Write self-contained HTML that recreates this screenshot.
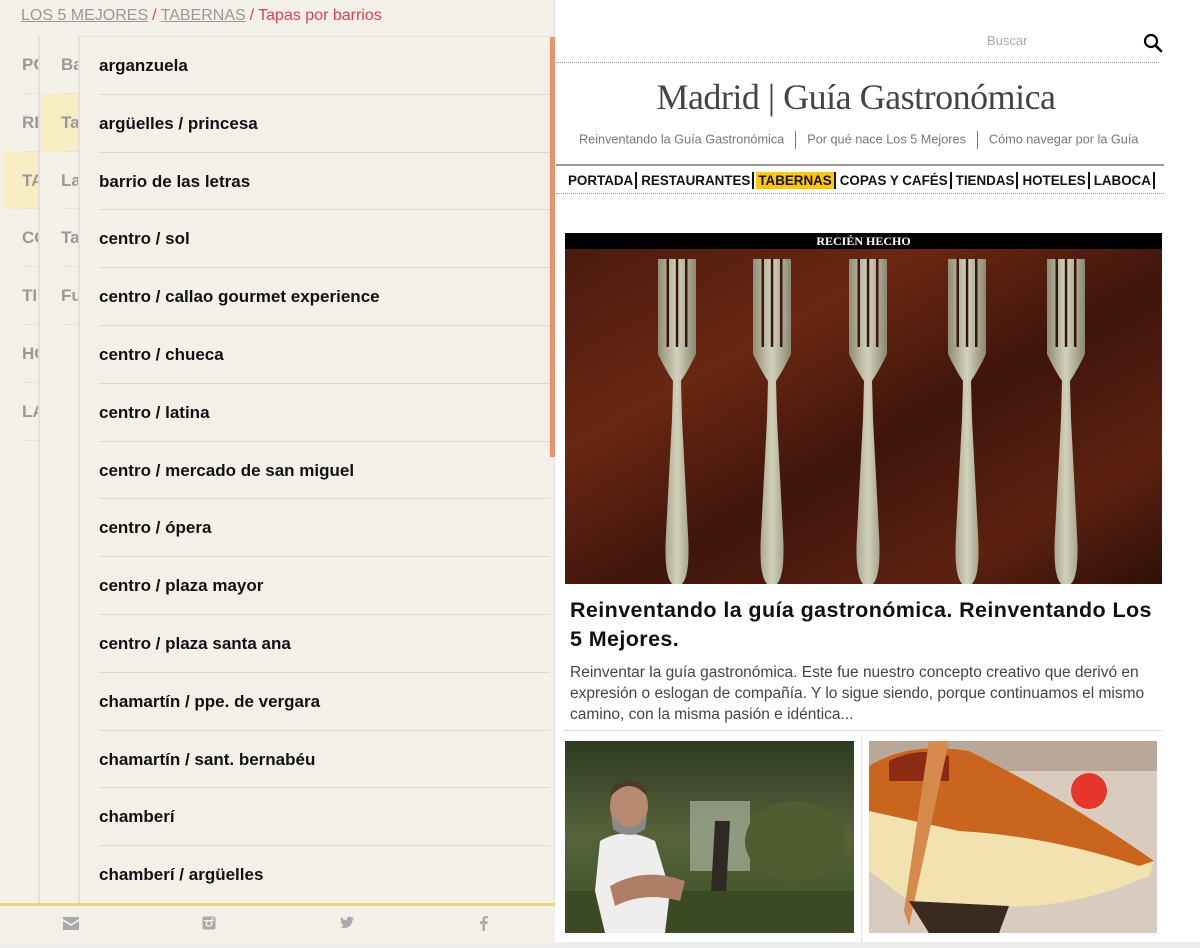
<!DOCTYPE html>
<html><head><meta charset="utf-8">
<style>
*{margin:0;padding:0;box-sizing:border-box}
body{width:1200px;height:948px;overflow:hidden;background:#fff;font-family:"Liberation Sans",sans-serif;position:relative}
.panel{position:absolute;left:0;top:0;width:555px;height:942px;background:#f3f0e7;border-right:1px solid #e3e0d6}
.crumb{position:absolute;left:21px;top:7px;font-size:16px;color:#999}
.crumb u{color:#999;text-decoration:underline}
.crumb .s{color:#e0414a;margin:0 4px}
.crumb .r{color:#e0414a}
.c1{position:absolute;left:3px;top:36px;width:37px;height:869px;border-right:2px solid #e5e1d6;overflow:hidden}
.c2{position:absolute;left:41px;top:36px;width:39px;height:869px;border-right:2px solid #e5e1d6;overflow:hidden}
.c3{position:absolute;left:80px;top:36px;width:475px;height:869px;overflow:hidden;border-top:1px solid #e8e4da}
.row{height:57.8px;position:relative;font-weight:bold;font-size:17px;line-height:57px;white-space:nowrap}
.c1 .row{color:#999;padding-left:19px}
.c1 .row:after{content:"";position:absolute;left:19px;right:0;bottom:0;border-bottom:1px solid #e5e1d6}
.c2 .row{color:#999;padding-left:20px}
.c2 .row:after{content:"";position:absolute;left:20px;right:0;bottom:0;border-bottom:1px solid #e5e1d6}
.hl{background:#f8ecc3}
.c3 .row{color:#111;padding-left:19px}
.c3 .row:after{content:"";position:absolute;left:19px;right:5px;bottom:0;border-bottom:1px solid #dedad0}
.scroll{position:absolute;left:550px;top:37px;width:5px;height:420px;background:#f0906a}
.foot{position:absolute;left:0;top:903px;width:555px;height:39px;background:#f3f0e7;border-top:3px solid #efd27a}
.foot svg{position:absolute;top:10px}
.bot{position:absolute;left:0;top:942px;width:1200px;height:6px;background:#eeeeec}
.search{position:absolute;left:987px;top:33px;font-size:13px;color:#aaa}
.dot{position:absolute;border-top:1px dotted #999}
h1{position:absolute;left:556px;width:600px;top:76px;text-align:center;font-family:"Liberation Serif",serif;font-weight:normal;font-size:36px;color:#444;letter-spacing:-0.5px}
.sub{position:absolute;left:579px;top:131px;font-size:12.7px;color:#777;white-space:nowrap}
.sub i{font-style:normal;display:inline-block;width:1px;height:18px;background:#777;vertical-align:middle;margin:0 11px 0 11px}
.nav{position:absolute;left:566px;top:172px;font-size:13.4px;font-weight:bold;color:#111;white-space:nowrap}
.nav span{display:inline-block;padding:1px 2px;border-right:2px solid #111;margin-right:2px}
.nav .on{background:#ffc800}
.tag{position:absolute;left:565px;top:233px;width:597px;height:16px;background:#000;color:#fff;font-family:"Liberation Serif",serif;font-weight:bold;font-size:12px;text-align:center;line-height:16px}
.title{position:absolute;left:570px;top:596px;width:592px;font-size:21.5px;font-weight:bold;line-height:29px;color:#111;letter-spacing:.4px}
.exc{position:absolute;left:570px;top:662px;width:590px;font-size:15.5px;line-height:21px;color:#444}
</style></head><body>
<div class="panel">
 <div class="crumb"><u>LOS 5 MEJORES</u><span class="s">/</span><u>TABERNAS</u><span class="s">/</span><span class="r">Tapas por barrios</span></div>
 <div class="c1">
  <div class="row">PORTADA</div><div class="row">RESTAURANTES</div><div class="row hl">TABERNAS</div><div class="row">COPAS</div><div class="row">TIENDAS</div><div class="row">HOTELES</div><div class="row">LABOCA</div>
 </div>
 <div class="c2">
  <div class="row">Barrios</div><div class="row hl">Tapas</div><div class="row">Las</div><div class="row">Tapas</div><div class="row">Fusion</div>
 </div>
 <div class="c3">
  <div class="row">arganzuela</div>
  <div class="row">argüelles / princesa</div>
  <div class="row">barrio de las letras</div>
  <div class="row">centro / sol</div>
  <div class="row">centro / callao gourmet experience</div>
  <div class="row">centro / chueca</div>
  <div class="row">centro / latina</div>
  <div class="row">centro / mercado de san miguel</div>
  <div class="row">centro / ópera</div>
  <div class="row">centro / plaza mayor</div>
  <div class="row">centro / plaza santa ana</div>
  <div class="row">chamartín / ppe. de vergara</div>
  <div class="row">chamartín / sant. bernabéu</div>
  <div class="row">chamberí</div>
  <div class="row">chamberí / argüelles</div>
 </div>
 <div class="scroll"></div>
 <div class="foot">
  <svg style="left:63px" width="16" height="14" viewBox="0 0 16 14"><path d="M0 1h16v2L8 8 0 3z M0 5l8 5 8-5v9H0z" fill="#aaa"/></svg>
  <svg style="left:202px" width="14" height="14" viewBox="0 0 14 14"><rect x="0.5" y="0.5" width="13" height="13" rx="2" fill="#aaa"/><circle cx="7" cy="7.5" r="3.5" fill="#f3f0e7"/><circle cx="7" cy="7.5" r="2" fill="#aaa"/><rect x="2" y="4" width="10" height="1.2" fill="#f3f0e7"/><rect x="9.5" y="1.8" width="2" height="1.8" fill="#f3f0e7"/></svg>
  <svg style="left:340px" width="14" height="13" viewBox="0 0 24 20"><path d="M24 2.4c-.9.4-1.8.7-2.8.8 1-.6 1.8-1.6 2.2-2.7-1 .6-2 1-3.1 1.2C19.3.7 18 0 16.6 0c-2.7 0-4.9 2.2-4.9 4.9 0 .4 0 .8.1 1.1C7.7 5.8 4.1 3.9 1.7.9c-.4.7-.7 1.6-.7 2.5 0 1.7.9 3.2 2.2 4.1-.8 0-1.6-.2-2.2-.6v.1c0 2.4 1.7 4.4 3.9 4.8-.4.1-.8.2-1.3.2-.3 0-.6 0-.9-.1.6 2 2.4 3.4 4.6 3.4-1.7 1.3-3.8 2.1-6.1 2.1H0c2.2 1.4 4.8 2.2 7.5 2.2 9.1 0 14-7.5 14-14v-.6c1-.7 1.8-1.6 2.5-2.6z" fill="#aaa"/></svg>
  <svg style="left:480px" width="8" height="15" viewBox="0 0 8 15"><path d="M5 15V8h2.3l.4-2.7H5V3.6c0-.8.2-1.3 1.3-1.3H8V.1C7.7 0 6.9 0 6 0 4 0 2.5 1.2 2.5 3.4v1.9H0V8h2.5v7z" fill="#aaa"/></svg>
 </div>
</div>
<div class="bot"></div>

<div class="search">Buscar</div>
<svg style="position:absolute;left:1143px;top:33px" width="20" height="20" viewBox="0 0 20 20"><circle cx="8" cy="8" r="6" fill="none" stroke="#000" stroke-width="2.2"/><path d="M12.3 12.3L18 18" stroke="#000" stroke-width="2.6" stroke-linecap="round"/></svg>
<div class="dot" style="left:556px;top:62px;width:603px"></div>
<h1>Madrid | Guía Gastronómica</h1>
<div class="sub">Reinventando la Guía Gastronómica<i></i>Por qué nace Los 5 Mejores<i></i>Cómo navegar por la Guía</div>
<div style="position:absolute;left:556px;top:164px;width:608px;height:2px;background:#999"></div>
<div class="nav"><span>PORTADA</span><span>RESTAURANTES</span><span class="on">TABERNAS</span><span>COPAS Y CAFÉS</span><span>TIENDAS</span><span>HOTELES</span><span>LABOCA</span></div>
<div class="dot" style="left:556px;top:193px;width:608px"></div>

<div class="tag">RECIÉN HECHO</div>
<svg style="position:absolute;left:565px;top:249px" width="597" height="335" viewBox="0 0 597 335">
 <defs>
  <linearGradient id="wood" x1="0" y1="0" x2="1" y2="1">
   <stop offset="0" stop-color="#4a1a0e"/><stop offset=".3" stop-color="#6a2712"/><stop offset=".55" stop-color="#3f150b"/><stop offset=".8" stop-color="#5c2110"/><stop offset="1" stop-color="#2f0f08"/>
  </linearGradient>
  <linearGradient id="silver" x1="0" y1="0" x2="1" y2="0">
   <stop offset="0" stop-color="#8f8d74"/><stop offset=".5" stop-color="#d2d2bc"/><stop offset="1" stop-color="#8a876e"/>
  </linearGradient>
  <g id="fork">
   <path d="M-19,0 L19,0 L19,95 Q12,110 4,122 L5,160 L11,275 Q14,327 0,327 Q-14,327 -11,275 L-5,160 L-4,122 Q-12,110 -19,95 Z" fill="url(#silver)"/>
   <rect x="-10.5" y="0" width="2.5" height="88" fill="#3a150b"/>
   <rect x="-1.2" y="0" width="2.5" height="88" fill="#3a150b"/>
   <rect x="8" y="0" width="2.5" height="88" fill="#3a150b"/>
  </g>
 </defs>
 <rect width="597" height="335" fill="url(#wood)"/>
 <use href="#fork" x="112" y="10"/>
 <use href="#fork" x="207" y="10"/>
 <use href="#fork" x="303" y="10"/>
 <use href="#fork" x="402" y="10"/>
 <use href="#fork" x="501" y="10"/>
</svg>

<div class="title">Reinventando la guía gastronómica. Reinventando Los 5 Mejores.</div>
<div class="exc">Reinventar la guía gastronómica. Este fue nuestro concepto creativo que derivó en expresión o eslogan de compañía. Y lo sigue siendo, porque continuamos el mismo camino, con la misma pasión e idéntica...</div>
<div class="dot" style="left:565px;top:730px;width:597px;border-color:#bbb"></div>
<div style="position:absolute;left:861px;top:737px;height:205px;border-left:1px dotted #ccc"></div>

<svg style="position:absolute;left:565px;top:741px" width="289" height="192" viewBox="0 0 289 192">
 <defs><linearGradient id="sky" x1="0" y1="0" x2="0" y2="1"><stop offset="0" stop-color="#2f3b22"/><stop offset=".5" stop-color="#56633a"/><stop offset="1" stop-color="#3d4d24"/></linearGradient></defs>
 <rect width="289" height="192" fill="url(#sky)"/>
 <rect x="125" y="60" width="60" height="70" fill="#b9c0b0" opacity=".6"/>
 <path d="M150 80 L165 80 L160 170 L145 170Z" fill="#2c2a22"/>
 <ellipse cx="230" cy="100" rx="50" ry="40" fill="#4f5d30"/>
 <rect x="0" y="150" width="289" height="42" fill="#3b4a22"/>
 <path d="M35 100 Q60 85 90 100 L105 150 L100 192 L40 192 L30 150Z" fill="#eeeeec"/>
 <path d="M45 145 Q80 125 120 140 L115 160 Q80 150 50 165Z" fill="#b07e66"/>
 <ellipse cx="64" cy="65" rx="19" ry="24" fill="#b98a72"/>
 <path d="M46 72 Q64 100 82 72 L80 88 Q64 100 48 88Z" fill="#8a8a86"/>
 <path d="M46 55 Q64 35 82 55 L82 48 Q64 30 46 48Z" fill="#4b3b2e"/>
</svg>
<svg style="position:absolute;left:869px;top:741px" width="288" height="192" viewBox="0 0 288 192">
 <rect width="288" height="192" fill="#d9ccbf"/>
 <rect width="288" height="30" fill="#b9a89a"/>
 <path d="M0 25 Q40 0 100 10 Q200 60 285 120 L280 135 Q200 170 120 165 L40 160 L0 130Z" fill="#f1e2b0"/>
 <path d="M0 25 Q40 0 100 10 Q200 60 285 120 L270 125 Q180 95 90 90 L0 70Z" fill="#c9651d"/>
 <path d="M20 20 Q50 5 80 15 L80 40 Q50 40 20 40Z" fill="#8d2a12"/>
 <path d="M60 0 L80 0 L40 185 L35 170Z" fill="#d68a4c"/>
 <path d="M40 160 L140 165 L130 192 L60 192Z" fill="#3a2a22"/>
 <circle cx="220" cy="50" r="18" fill="#e6352a"/>
</svg>
</body></html>
